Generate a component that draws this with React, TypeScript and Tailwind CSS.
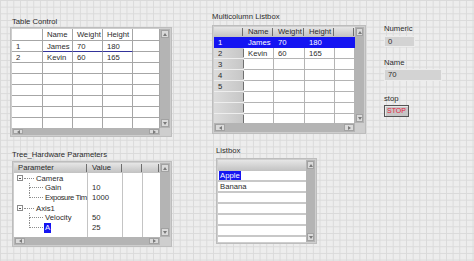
import type { ReactNode } from 'react'

type Dir = 'up' | 'down' | 'left' | 'right'

const arrowPaths: Record<Dir, string> = {
  up: 'M0 3 L2 0 L4 3 Z',
  down: 'M0 0 L4 0 L2 3 Z',
  left: 'M3 0 L3 4 L0 2 Z',
  right: 'M0 0 L3 2 L0 4 Z',
}

function ArrowBtn({ dir }: { dir: Dir }) {
  const vertical = dir === 'up' || dir === 'down'
  return (
    <div
      className={
        vertical
          ? 'flex h-[8px] w-full items-center justify-center border border-[#a2a2a2] bg-[#dadada]'
          : 'flex h-full w-[10px] items-center justify-center border border-[#a2a2a2] bg-[#dadada]'
      }
    >
      <svg width={vertical ? 4 : 3} height={vertical ? 3 : 4} viewBox={vertical ? '0 0 4 3' : '0 0 3 4'}>
        <path d={arrowPaths[dir]} fill="#7a7a7a" />
      </svg>
    </div>
  )
}

function VScroll() {
  return (
    <div className="flex h-full flex-col justify-between bg-[#b4b4b4] p-[1px]">
      <ArrowBtn dir="up" />
      <ArrowBtn dir="down" />
    </div>
  )
}

function HScroll() {
  return (
    <div className="flex h-full justify-between bg-[#b4b4b4] p-[1px]">
      <ArrowBtn dir="left" />
      <ArrowBtn dir="right" />
    </div>
  )
}

function Label({ children }: { children: ReactNode }) {
  return <div className="h-[9px] whitespace-nowrap leading-[9px]">{children}</div>
}

/* ---------- Table Control ---------- */

const tcWidths = ['w-[31px]', 'w-[30px]', 'w-[30px]', 'w-[30px]', 'w-[27px]']
const tcRows = [
  ['', 'Name', 'Weight', 'Height', ''],
  ['1', 'James', '70', '180', ''],
  ['2', 'Kevin', '60', '165', ''],
  ['', '', '', '', ''],
  ['', '', '', '', ''],
  ['', '', '', '', ''],
  ['', '', '', '', ''],
  ['', '', '', '', ''],
  ['', '', '', '', ''],
]

function TableControl() {
  return (
    <div className="flex flex-col">
      <div className="pl-[2px]">
        <Label>Table Control</Label>
      </div>
      <div className="mt-[1px] grid h-[110px] w-[162px] grid-cols-[148px_10px] grid-rows-[99px_7px] border border-[#bdbdbd] bg-[#cecece] p-[1px]">
        <div className="overflow-hidden bg-white">
          {tcRows.map((row, r) => (
            <div key={r} className={r === 0 ? 'flex h-[12px]' : 'flex h-[11px]'}>
              {row.map((cell, c) => (
                <div
                  key={c}
                  className={`${tcWidths[c]} shrink-0 border-r border-b pl-[4px] ${
                    r === 0 ? 'leading-[12px]' : 'leading-[11px]'
                  } ${r === 1 && c > 0 && c < 4 ? 'border-r-[#a6a6a6] border-b-[#34349a]' : 'border-[#a6a6a6]'}`}
                >
                  {cell}
                </div>
              ))}
            </div>
          ))}
        </div>
        <VScroll />
        <HScroll />
        <div />
      </div>
    </div>
  )
}

/* ---------- Multicolumn Listbox ---------- */

const mcWidths = ['w-[30px]', 'w-[30px]', 'w-[31px]', 'w-[30px]', 'w-[20px]']
const mcRows = [
  ['1', 'James', '70', '180', ''],
  ['2', 'Kevin', '60', '165', ''],
  ['3', '', '', '', ''],
  ['4', '', '', '', ''],
  ['5', '', '', '', ''],
  ['', '', '', '', ''],
  ['', '', '', '', ''],
  ['', '', '', '', ''],
]

function HeaderCell({ width, children }: { width: string; children?: ReactNode }) {
  return (
    <div className={`${width} flex h-full shrink-0 items-center bg-linear-to-b from-[#e6e6e6] to-[#c2c2c2] pl-[4px]`}>
      <span className="flex-1 whitespace-nowrap">{children}</span>
      <span className="mr-[1px] h-[8px] w-[1px] bg-[#6e6e6e]" />
    </div>
  )
}

function MulticolumnListbox() {
  return (
    <div className="flex flex-col">
      <Label>Multicolumn Listbox</Label>
      <div className="mt-[4px] grid h-[109px] w-[154px] grid-cols-[141px_9px] grid-rows-[96px_9px] border border-[#bdbdbd] bg-[#cecece] p-[1px]">
        <div className="flex flex-col overflow-hidden bg-white">
          <div className="flex h-[10px] shrink-0 leading-[10px]">
            <HeaderCell width={mcWidths[0]} />
            <HeaderCell width={mcWidths[1]}>Name</HeaderCell>
            <HeaderCell width={mcWidths[2]}>Weight</HeaderCell>
            <HeaderCell width={mcWidths[3]}>Height</HeaderCell>
            <HeaderCell width={mcWidths[4]} />
          </div>
          {mcRows.map((row, r) => (
            <div key={r} className={`flex h-[11px] shrink-0 leading-[11px] ${r === 0 ? 'bg-[#1414f2] text-white' : ''}`}>
              {row.map((cell, c) =>
                c === 0 ? (
                  <div
                    key={c}
                    className={`${mcWidths[0]} flex shrink-0 border-b pl-[4px] ${
                      r === 0
                        ? 'border-[#1414f2]'
                        : 'border-[#eeeeee] bg-linear-to-r from-[#dcdcdc] to-[#c6c6c6]'
                    }`}
                  >
                    <span className="flex-1">{cell}</span>
                    <span className={r === 0 ? 'w-[1px]' : 'my-[1px] w-[1px] bg-[#707070]'} />
                  </div>
                ) : (
                  <div
                    key={c}
                    className={`${mcWidths[c]} shrink-0 border-r border-b pl-[4px] ${
                      r === 0 ? 'border-[#1414f2]' : 'border-[#b4b4b4]'
                    }`}
                  >
                    {cell}
                  </div>
                ),
              )}
            </div>
          ))}
        </div>
        <VScroll />
        <HScroll />
        <div />
      </div>
    </div>
  )
}

/* ---------- Numeric / Name / stop ---------- */

function RightControls() {
  return (
    <div className="flex flex-col">
      <Label>Numeric</Label>
      <div className="mt-[3px] h-[11px] w-[31px] border border-[#ececec] bg-[#d3d3d3] pl-[3px] leading-[9px]">0</div>
      <div className="mt-[11px]">
        <Label>Name</Label>
      </div>
      <div className="mt-[2px] h-[12px] w-[58px] border border-[#ececec] bg-[#d3d3d3] pl-[3px] leading-[10px]">70</div>
      <div className="mt-[13px]">
        <Label>stop</Label>
      </div>
      <div className="mt-[2px] flex h-[12px] w-[25px] items-center justify-center border border-[#555555] bg-[#c6c6c6] text-[7px] leading-[10px] text-[#e8203e] shadow-[inset_1px_1px_0_#e8e8e8]">
        STOP
      </div>
    </div>
  )
}

/* ---------- Tree ---------- */

function Expander() {
  return (
    <div className="flex h-[6px] w-[6px] shrink-0 items-center justify-center border border-[#8c8c8c] bg-white">
      <div className="h-[1px] w-[2px] bg-[#555555]" />
    </div>
  )
}

function ParentRow({ text }: { text: string }) {
  return (
    <div className="flex h-[10px] items-center">
      <div className="w-[3px] shrink-0" />
      <Expander />
      <div className="mx-[1px] w-[10px] shrink-0 border-t border-dotted border-[#8c8c8c]" />
      <span className="ml-[1px] whitespace-nowrap">{text}</span>
    </div>
  )
}

function ChildRow({
  text,
  last,
  selected,
  tight,
}: {
  text: string
  last?: boolean
  selected?: boolean
  tight?: boolean
}) {
  return (
    <div className="flex h-[10px] items-stretch">
      <div className="w-[15px] shrink-0" />
      <div className="flex w-[14px] shrink-0 flex-col">
        <div className="h-[5px] border-b border-l border-dotted border-[#8c8c8c]" />
        <div className={last ? 'h-[5px]' : 'h-[5px] border-l border-dotted border-[#8c8c8c]'} />
      </div>
      <span
        className={`ml-[1px] self-center whitespace-nowrap leading-[10px] ${
          selected ? 'bg-[#1414f2] px-[1px] text-white' : 'ml-[2px]'
        } ${tight ? 'tracking-[-0.45px]' : ''}`}
      >
        {text}
      </span>
    </div>
  )
}

function TreeControl() {
  const values = ['', '10', '1000', '', '50', '25']
  return (
    <div className="flex flex-col">
      <Label>Tree_Hardware Parameters</Label>
      <div className="mt-[2px] grid h-[86px] w-[160px] grid-cols-[146px_10px] grid-rows-[74px_8px] border border-[#bdbdbd] bg-[#cecece] p-[1px]">
        <div className="flex flex-col overflow-hidden bg-white">
          <div className="flex h-[10px] shrink-0 leading-[10px]">
            <HeaderCell width="w-[74px]">Parameter</HeaderCell>
            <HeaderCell width="w-[35px]">Value</HeaderCell>
            <HeaderCell width="w-[20px]" />
            <HeaderCell width="w-[17px]" />
          </div>
          <div className="flex flex-1">
            <div className="w-[74px] shrink-0 border-r border-[#c4c4c4]">
              <ParentRow text="Camera" />
              <ChildRow text="Gain" />
              <ChildRow text="Exposure Tim" last tight />
              <ParentRow text="Axis1" />
              <ChildRow text="Velocity" />
              <ChildRow text="A" last selected />
            </div>
            <div className="w-[35px] shrink-0 border-r border-[#c4c4c4] pl-[4px]">
              {values.map((v, i) => (
                <div key={i} className="h-[10px] leading-[10px]">
                  {v}
                </div>
              ))}
            </div>
            <div className="w-[20px] shrink-0 border-r border-[#c4c4c4]" />
            <div className="w-[17px] shrink-0" />
          </div>
        </div>
        <VScroll />
        <HScroll />
        <div />
      </div>
    </div>
  )
}

/* ---------- Listbox ---------- */

function Listbox() {
  const items = ['Apple', 'Banana', '', '', '', '', '']
  return (
    <div className="flex flex-col">
      <Label>Listbox</Label>
      <div className="mt-[3px] grid h-[86px] w-[101px] grid-cols-[88px_9px] border border-[#bdbdbd] bg-[#cecece] p-[1px]">
        <div className="flex flex-col overflow-hidden bg-white">
          <div className="h-[11px] shrink-0 bg-linear-to-b from-[#e6e6e6] to-[#c2c2c2]" />
          {items.map((item, i) => (
            <div key={i} className="h-[11px] shrink-0 border-b-2 border-[#c8c8c8] pl-[1px] leading-[9px]">
              {item && (
                <span className={i === 0 ? 'bg-[#1414f2] px-[1px] text-white' : 'px-[1px]'}>{item}</span>
              )}
            </div>
          ))}
        </div>
        <VScroll />
      </div>
    </div>
  )
}

export default function App() {
  return (
    <div className="h-[261px] w-[474px] overflow-hidden bg-[#ededed] font-['Liberation_Sans',Arial,sans-serif] text-[7.7px] leading-[9px] text-[#2b2b2b] [background-image:linear-gradient(to_right,#dadada_1px,transparent_1px),linear-gradient(to_bottom,#dadada_1px,transparent_1px)] [background-size:6.67px_6.67px]">
      <div className="flex h-[146px] items-start">
        <div className="ml-[10px] mt-[17px]">
          <TableControl />
        </div>
        <div className="ml-[40px] mt-[12px]">
          <MulticolumnListbox />
        </div>
        <div className="ml-[18px] mt-[24px]">
          <RightControls />
        </div>
      </div>
      <div className="flex items-start">
        <div className="ml-[12px] mt-[4px]">
          <TreeControl />
        </div>
        <div className="ml-[44px]">
          <Listbox />
        </div>
      </div>
    </div>
  )
}
